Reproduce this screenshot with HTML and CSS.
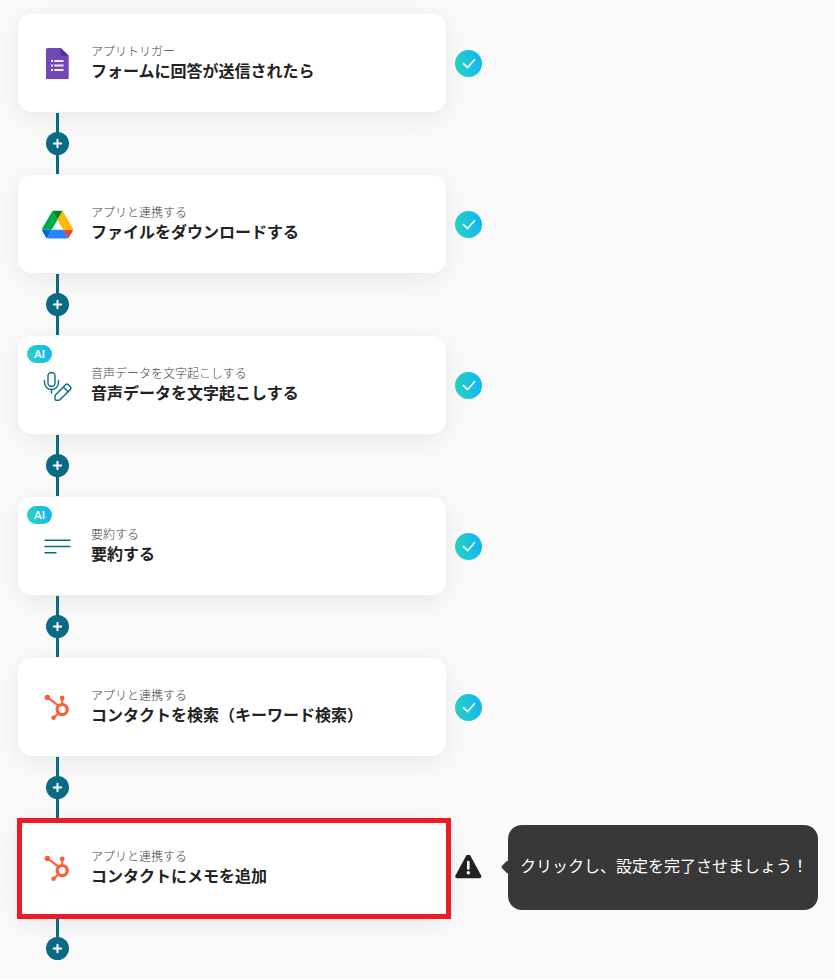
FILE: index.html
```
<!DOCTYPE html>
<html lang="ja">
<head>
    <meta charset="UTF-8">
    <meta name="viewport" content="width=device-width, initial-scale=1.0">
    <title>フロー</title>
    <link rel="stylesheet" href="styles.css">
</head>
<body>
    <!-- shared icons -->
    <svg class="sprite" aria-hidden="true">
        <defs>
            <linearGradient id="done-bg" x1="0" y1="0.6" x2="1" y2="0.4">
                <stop offset="0" stop-color="#2bd4c0"/>
                <stop offset="1" stop-color="#10b4f4"/>
            </linearGradient>
        </defs>
        <symbol id="icon-done" viewBox="0 0 27 27">
            <circle cx="13.5" cy="13.5" r="13.5" fill="url(#done-bg)"/>
            <path d="M8.5 13.6l4.2 4 6.800-7.900" fill="none" stroke="#fff" stroke-width="1.6" stroke-linecap="round" stroke-linejoin="round"/>
        </symbol>
        <symbol id="icon-plus" viewBox="0 0 23 23">
            <path d="M11.5 7.8v7.4M7.8 11.5h7.4" stroke="#fff" stroke-width="2" stroke-linecap="round"/>
        </symbol>
        <symbol id="icon-hubspot" viewBox="0 0 31 32">
            <g fill="#ff5c35">
                <circle cx="5.4" cy="6.4" r="2.7"/>
                <circle cx="20.2" cy="7" r="2.4"/>
                <circle cx="11.6" cy="26.7" r="2.3"/>
            </g>
            <g fill="none" stroke="#ff5c35">
                <circle cx="20.2" cy="18.6" r="5.1" stroke-width="3.2"/>
                <path d="M5.4 6.4l10.8 8M20.2 7v6.5M11.6 26.7l4.6-4.3" stroke-width="2"/>
            </g>
        </symbol>
    </svg>

    <main>
        <ol class="flow">
            <li class="step">
                <div class="step-row">
                    <article class="card">
                        <svg class="card-icon" viewBox="0 0 31 32" aria-hidden="true">
                            <path d="M5.5 1h13.2l8 7.7v22.500a1.500 1.500 0 0 1-1.500 1.500H5.500A1.500 1.500 0 0 1 4 31.200V2.500A1.500 1.500 0 0 1 5.500 1z" fill="#7248b9"/>
                            <path d="M18.700 1l8 7.700h-6.500a1.500 1.500 0 0 1-1.500-1.500z" fill="#4f3389"/>
                            <path d="M9 14h2M9 18.500h2M9 23h2M12.300 14h9.200M12.300 18.500h9.200M12.300 23h9.200" stroke="#f1edf8" stroke-width="2"/>
                        </svg>
                        <div class="card-text">
                            <p class="card-label">アプリトリガー</p>
                            <h2 class="card-title">フォームに回答が送信されたら</h2>
                        </div>
                    </article>
                    <svg class="status" role="img" aria-label="設定済み"><use href="#icon-done"/></svg>
                </div>
                <div class="connector">
                    <button type="button" class="add-btn" aria-label="追加"><svg><use href="#icon-plus"/></svg></button>
                </div>
            </li>

            <li class="step">
                <div class="step-row">
                    <article class="card">
                        <svg class="card-icon" viewBox="0 -8 87.3 90" aria-hidden="true">
                            <path d="m6.600 66.850 3.850 6.650c.8 1.400 1.950 2.500 3.300 3.300l13.750-23.800h-27.500c0 1.550.4 3.100 1.200 4.500z" fill="#0066da"/>
                            <path d="m43.650 25-13.750-23.800c-1.350.8-2.500 1.900-3.300 3.300l-25.400 44a9.060 9.060 0 0 0-1.200 4.500h27.500z" fill="#00ac47"/>
                            <path d="m73.550 76.800c1.350-.8 2.500-1.900 3.300-3.300l1.600-2.750 7.650-13.250c.8-1.400 1.200-2.950 1.200-4.500h-27.502l5.852 11.500z" fill="#ea4335"/>
                            <path d="m43.650 25 13.750-23.800c-1.350-.8-2.900-1.200-4.500-1.200h-18.500c-1.600 0-3.150.45-4.500 1.200z" fill="#00832d"/>
                            <path d="m59.800 53h-32.300l-13.750 23.800c1.350.8 2.900 1.200 4.500 1.200h50.800c1.600 0 3.150-.45 4.500-1.200z" fill="#2684fc"/>
                            <path d="m73.400 26.500-12.700-22c-.8-1.400-1.950-2.500-3.300-3.300l-13.750 23.800 16.150 28h27.450c0-1.550-.4-3.100-1.200-4.500z" fill="#ffba00"/>
                        </svg>
                        <div class="card-text">
                            <p class="card-label">アプリと連携する</p>
                            <h2 class="card-title">ファイルをダウンロードする</h2>
                        </div>
                    </article>
                    <svg class="status" role="img" aria-label="設定済み"><use href="#icon-done"/></svg>
                </div>
                <div class="connector">
                    <button type="button" class="add-btn" aria-label="追加"><svg><use href="#icon-plus"/></svg></button>
                </div>
            </li>

            <li class="step">
                <div class="step-row">
                    <article class="card">
                        <span class="badge">AI</span>
                        <svg class="card-icon line-icon" viewBox="0 0 31 32" aria-hidden="true">
                            <rect x="6" y="3.500" width="7" height="14" rx="3.500"/>
                            <path d="M2.500 11.500v2a7 7 0 0 0 14 0v-2M9.500 20.700v3.500"/>
                            <path d="M13 27.200q0-.8.6-1.400l10-10q1.400-1.400 2.800 0l1.900 1.900q1.400 1.400 0 2.800L18 30.700q-.6.6-1.400.6h-2.300q-1.300 0-1.300-1.300zM21.300 18.100l4.700 4.700"/>
                        </svg>
                        <div class="card-text">
                            <p class="card-label">音声データを文字起こしする</p>
                            <h2 class="card-title">音声データを文字起こしする</h2>
                        </div>
                    </article>
                    <svg class="status" role="img" aria-label="設定済み"><use href="#icon-done"/></svg>
                </div>
                <div class="connector">
                    <button type="button" class="add-btn" aria-label="追加"><svg><use href="#icon-plus"/></svg></button>
                </div>
            </li>

            <li class="step">
                <div class="step-row">
                    <article class="card">
                        <span class="badge">AI</span>
                        <svg class="card-icon line-icon" viewBox="0 0 31 32" aria-hidden="true">
                            <path d="M3 10.200h25M3 16.500h25M3 22.800h11"/>
                        </svg>
                        <div class="card-text">
                            <p class="card-label">要約する</p>
                            <h2 class="card-title">要約する</h2>
                        </div>
                    </article>
                    <svg class="status" role="img" aria-label="設定済み"><use href="#icon-done"/></svg>
                </div>
                <div class="connector">
                    <button type="button" class="add-btn" aria-label="追加"><svg><use href="#icon-plus"/></svg></button>
                </div>
            </li>

            <li class="step">
                <div class="step-row">
                    <article class="card">
                        <svg class="card-icon" aria-hidden="true"><use href="#icon-hubspot"/></svg>
                        <div class="card-text">
                            <p class="card-label">アプリと連携する</p>
                            <h2 class="card-title">コンタクトを検索（キーワード検索）</h2>
                        </div>
                    </article>
                    <svg class="status" role="img" aria-label="設定済み"><use href="#icon-done"/></svg>
                </div>
                <div class="connector">
                    <button type="button" class="add-btn" aria-label="追加"><svg><use href="#icon-plus"/></svg></button>
                </div>
            </li>

            <li class="step">
                <div class="step-row">
                    <article class="card highlighted">
                        <svg class="card-icon" aria-hidden="true"><use href="#icon-hubspot"/></svg>
                        <div class="card-text">
                            <p class="card-label">アプリと連携する</p>
                            <h2 class="card-title">コンタクトにメモを追加</h2>
                        </div>
                    </article>
                    <svg class="status" viewBox="0 2 27 27" role="img" aria-label="未設定">
                        <path d="M11.300 2.600q2-3 4 0L26 22.200q1.200 3-1.600 3H2.200q-2.800 0-1.600-3z" fill="#222"/>
                        <path d="M13.300 9v6.500" stroke="#fff" stroke-width="2.600" stroke-linecap="round"/>
                        <circle cx="13.300" cy="19.800" r="1.700" fill="#fff"/>
                    </svg>
                    <p class="tooltip">クリックし、設定を完了させましょう！</p>
                </div>
                <div class="connector">
                    <button type="button" class="add-btn" aria-label="追加"><svg><use href="#icon-plus"/></svg></button>
                </div>
            </li>
        </ol>
    </main>
</body>
</html>
```

FILE: styles.css
```
* {
    margin: 0;
    padding: 0;
    box-sizing: border-box;
}

body {
    font-family: "Noto Sans CJK JP", "Noto Sans", sans-serif;
    background-color: #fafafa;
    color: #222;
}

.sprite {
    position: absolute;
    width: 0;
    height: 0;
}

.flow {
    list-style: none;
    padding: 14px 17px 0 18px;
}

.step-row {
    display: flex;
    align-items: center;
    gap: 9px;
}

.card {
    position: relative;
    display: flex;
    align-items: center;
    gap: 18px;
    flex: 0 1 428px;
    min-height: 98px;
    padding: 24px;
    background: white;
    border-radius: 14px;
    box-shadow: 0 6px 28px rgba(0, 0, 0, 0.08);
}

.card-icon {
    flex: none;
    width: 31px;
    height: 32px;
}

.line-icon {
    fill: none;
    stroke: #0b6a83;
    stroke-width: 1.4;
    stroke-linecap: round;
    stroke-linejoin: round;
}

.card-text {
    padding-bottom: 6px;
}

.card-label {
    font-size: 12px;
    font-weight: 300;
    line-height: 20px;
    color: #444;
}

.card-title {
    font-size: 16px;
    font-weight: 700;
    line-height: 18px;
}

.badge {
    position: absolute;
    top: 9px;
    left: 9px;
    width: 25px;
    border-radius: 9px;
    background: linear-gradient(75deg, #2bd4c0, #10b4f4);
    color: white;
    font-family: Lato, sans-serif;
    font-size: 11px;
    font-weight: 700;
    line-height: 18px;
    text-align: center;
}

.status {
    flex: none;
    width: 27px;
    height: 27px;
}

/* vertical line with the add button on it */
.connector {
    display: flex;
    justify-content: center;
    width: 23px;
    margin: 1px 28px;
    padding: 19px 0;
    background: linear-gradient(#0b6a83, #0b6a83) center / 3px 100% no-repeat;
    position: relative;
}

.step:last-child .connector {
    margin-bottom: 0;
    padding-bottom: 0;
}

.add-btn {
    width: 23px;
    height: 23px;
    border: none;
    border-radius: 50%;
    background: #0b6a83;
    cursor: pointer;
}

.add-btn svg {
    display: block;
    width: 23px;
    height: 23px;
}

.highlighted {
    border-radius: 4px;
}

.highlighted::after {
    content: "";
    position: absolute;
    inset: -1px -5px -2px -1px;
    border: 5px solid #ed1c24;
}

.tooltip {
    position: relative;
    margin-bottom: 2px;
    margin-left: 17px;
    padding: 28px 10px 32px 12px;
    border-radius: 14px;
    background: #383838;
    color: white;
    font-size: 16px;
    line-height: 25px;
}

.tooltip::before {
    content: "";
    position: absolute;
    top: 50%;
    left: -5px;
    width: 10px;
    height: 10px;
    margin-top: -5px;
    border-radius: 2px;
    background: #383838;
    transform: rotate(45deg);
}
```
